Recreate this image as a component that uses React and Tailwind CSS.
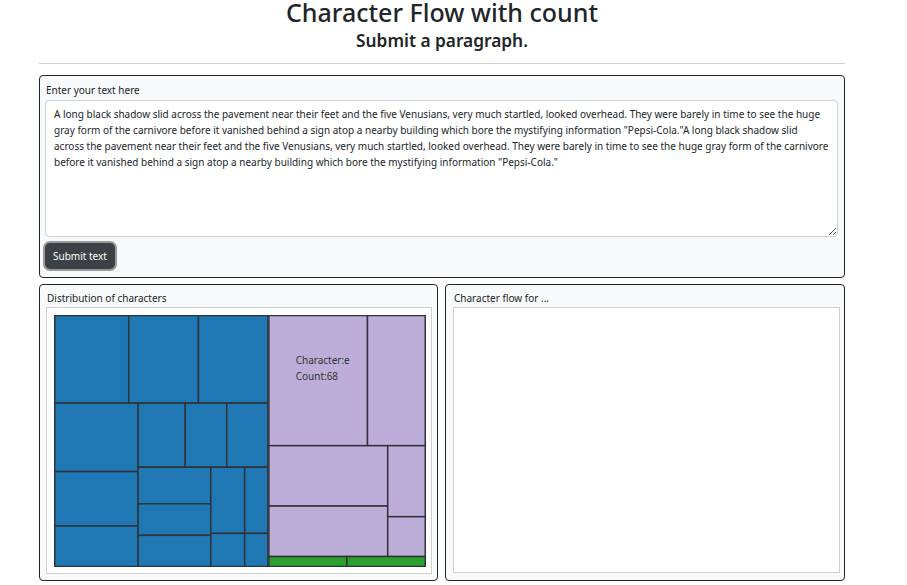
import React from 'react';

const paragraph =
  'A long black shadow slid across the pavement near their feet and the five Venusians, very much startled, looked overhead. They were barely in time to see the huge gray form of the carnivore before it vanished behind a sign atop a nearby building which bore the mystifying information "Pepsi-Cola."A long black shadow slid across the pavement near their feet and the five Venusians, very much startled, looked overhead. They were barely in time to see the huge gray form of the carnivore before it vanished behind a sign atop a nearby building which bore the mystifying information "Pepsi-Cola."';

// treemap cells in page coords [x0, y0, x1, y1]
const blue = [
  [54, 315, 128.3, 403], [128.3, 315, 198.3, 403], [198.3, 315, 268, 403],
  [54, 403, 137.7, 471.7], [54, 471.7, 137.7, 526.3], [54, 526.3, 137.7, 567],
  [137.7, 403, 185, 467.3], [185, 403, 226.7, 467.3], [226.7, 403, 268, 467.3],
  [137.7, 467.3, 210.7, 504], [137.7, 504, 210.7, 535.7], [137.7, 535.7, 210.7, 567],
  [210.7, 467.3, 244.7, 533.7], [244.7, 467.3, 268, 533.7],
  [210.7, 533.7, 244.7, 567], [244.7, 533.7, 268, 567],
];
const purple = [
  [269, 315, 368, 445.7], [368, 315, 426, 445.7],
  [269, 445.7, 388.3, 506.3], [269, 506.3, 388.3, 557],
  [388.3, 445.7, 426, 517], [388.3, 517, 426, 557],
];
const green = [[269, 557, 347.3, 567], [347.3, 557, 426, 567]];

const Cells = ({ list, fill }) =>
  list.map(([x0, y0, x1, y1], i) => (
    <rect
      key={i}
      x={x0 - 54}
      y={y0 - 315}
      width={x1 - x0}
      height={y1 - y0}
      fill={fill}
      stroke="#2f3338"
      strokeWidth="1.5"
    />
  ));

const Treemap = () => (
  <svg width="372" height="252" viewBox="-0.5 -0.5 373 253" className="block">
    <Cells list={blue} fill="#1f77b4" />
    <Cells list={purple} fill="#bcaed9" />
    <Cells list={green} fill="#2ca02c" />
    <text x="242" y="49" fontSize="10" fill="#333" fontFamily="Noto Sans, sans-serif">Character:e</text>
    <text x="242" y="65" fontSize="10" fill="#333" fontFamily="Noto Sans, sans-serif">Count:68</text>
  </svg>
);

const App = () => {
  return (
    <div className="min-h-screen bg-white text-[#212529]" style={{ fontFamily: '"Noto Sans", sans-serif' }}>
      <div className="ml-[39px] w-[806px]">
        <div className="h-[63px] flex flex-col items-center">
          <h1 className="text-[25px] leading-[25px] font-medium">Character Flow with count</h1>
          <h2 className="text-[17.3px] leading-[22px] font-semibold mt-[5px]">Submit a paragraph.</h2>
        </div>
        <hr className="border-t border-[#cfcfcf]" />

        <div className="mt-[11px] h-[203px] rounded-[4px] border border-[#212529] bg-[#f8f9fa] pl-[5px] pr-[6px] pt-[7px]">
          <p className="text-[10px] leading-[14px] pl-[1px]">Enter your text here</p>
          <textarea
            readOnly
            defaultValue={paragraph}
            className="mt-[3px] block w-full h-[137px] resize-y rounded-[4px] border border-[#ced4da] bg-white px-[8px] py-[5px] text-[10px] leading-[16px] text-[#212529] outline-none"
          />
          <button className="mt-[6px] rounded-[5px] bg-[#3d4145] px-[8px] h-[26px] text-[10px] text-white ring-2 ring-[#9a9a9a]">
            Submit text
          </button>
        </div>

        <div className="mt-[6px] grid grid-cols-[399px_400px] gap-[7px]">
          <div className="h-[297px] rounded-[4px] border border-[#212529] bg-[#f8f9fa] pl-[6px] pr-[5px] pt-[6px]">
            <p className="text-[10px] leading-[14px] pl-[1px]">Distribution of characters</p>
            <div className="mt-[2px] h-[267px] border border-[#cfcfcf] bg-white pl-[7px] pt-[7px]">
              <Treemap />
            </div>
          </div>
          <div className="h-[297px] rounded-[4px] border border-[#212529] bg-[#f8f9fa] pl-[7px] pr-[4px] pt-[6px]">
            <p className="text-[10px] leading-[14px] pl-[1px]">Character flow for ...</p>
            <div className="mt-[2px] h-[266px] border border-[#cfcfcf] bg-white" />
          </div>
        </div>
      </div>
    </div>
  );
};

export default App;
